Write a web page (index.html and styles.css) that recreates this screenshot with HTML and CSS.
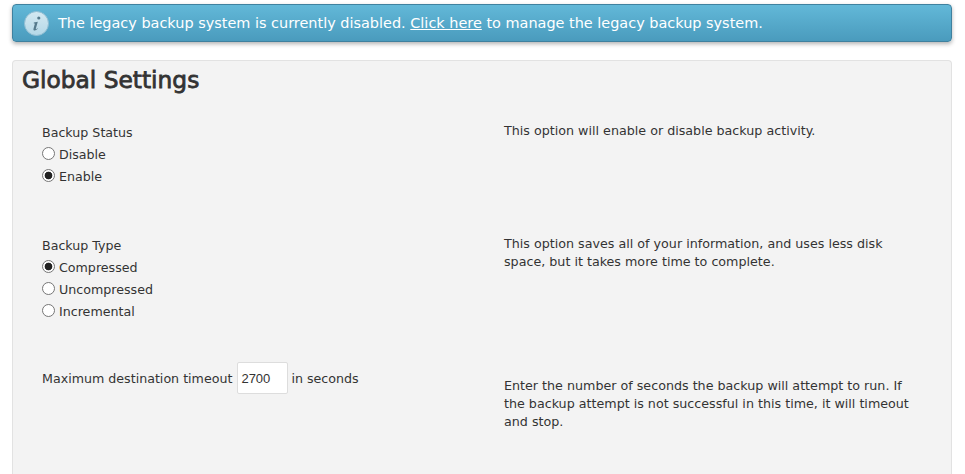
FILE: index.html
```html
<!DOCTYPE html>
<html lang="en">
<head>
    <meta charset="UTF-8">
    <title>Backup Configuration</title>
    <link rel="stylesheet" href="styles.css">
</head>
<body>
    <div class="notice">
        <span class="noticeIcon">
            <svg width="25" height="25" viewBox="0 0 25 25">
                <defs>
                    <linearGradient id="iconFill" x1="0" y1="0" x2="0" y2="1">
                        <stop offset="0" stop-color="#d4e9f2"/>
                        <stop offset="1" stop-color="#b4d8e7"/>
                    </linearGradient>
                </defs>
                <circle cx="12.500" cy="12.500" r="12" fill="url(#iconFill)" stroke="#8fbdd2" stroke-width="1"/>
                <path d="M13.200 7a1.600 1.600 0 1 0 3.200 0a1.600 1.600 0 1 0-3.200 0zM9.800 11.500l4-.7-2 7c-.1.500.3.600.7.300l1-.9.400.4c-1 1.300-2.200 2-3.300 2-1 0-1.400-.7-1.100-1.800l1.400-5.200-1.100-.1z" fill="#557a8c"/>
            </svg>
        </span>
        <span>The legacy backup system is currently disabled. <a href="#">Click here</a> to manage the legacy backup system.</span>
    </div>
    <div class="panel">
        <h2>Global Settings</h2>
        <div class="row rowStatus">
            <div class="field">
                <div class="fieldLabel">Backup Status</div>
                <label class="radio"><input type="radio" name="status">Disable</label>
                <label class="radio"><input type="radio" name="status" checked>Enable</label>
            </div>
            <p class="help">This option will enable or disable backup activity.</p>
        </div>
        <div class="row rowType">
            <div class="field">
                <div class="fieldLabel">Backup Type</div>
                <label class="radio"><input type="radio" name="type" checked>Compressed</label>
                <label class="radio"><input type="radio" name="type">Uncompressed</label>
                <label class="radio"><input type="radio" name="type">Incremental</label>
            </div>
            <p class="help">This option saves all of your information, and uses less disk space, but it takes more time to complete.</p>
        </div>
        <div class="row rowTimeout">
            <div class="field inline">
                <span>Maximum destination timeout</span>
                <input type="text" class="sText" value="2700">
                <span>in seconds</span>
            </div>
            <p class="help helpLow">Enter the number of seconds the backup will attempt to run. If the backup attempt is not successful in this time, it will timeout and stop.</p>
        </div>
    </div>
</body>
</html>
```

FILE: styles.css
```css
* {
    margin: 0;
    padding: 0;
    box-sizing: border-box;
}

html, body {
    height: 474px;
    overflow: hidden;
}

body {
    background: #fff;
    padding: 4px 13px 0 12px;
    font-family: "DejaVu Sans", sans-serif;
    font-size: 12.65px;
    line-height: 18px;
    color: #333;
}

.notice {
    display: flex;
    align-items: center;
    gap: 9px;
    height: 38px;
    padding-left: 11px;
    border: 1px solid #3f819f;
    border-radius: 4px;
    background: linear-gradient(#62b8d8, #4a9bbd);
    box-shadow: 0 2px 4px rgba(0, 0, 0, .3);
    color: #fff;
    font-size: 14.44px;
}
.notice a {
    color: #fff;
}
.noticeIcon {
    display: flex;
}

.panel {
    height: 414px;
    margin-top: 18px;
    padding: 5px 9px;
    background: #f3f3f3;
    border: 1px solid #e2e2e2;
    border-bottom: 0;
    border-radius: 4px 4px 0 0;
}
.panel h2 {
    font-size: 23.3px;
    line-height: 27px;
    font-weight: normal;
    -webkit-text-stroke: .8px #333;
    color: #333;
}

.row {
    display: grid;
    grid-template-columns: 462px 410px;
    padding-left: 20px;
}
.rowStatus {
    margin-top: 31px;
    height: 113px;
}
.rowType {
    height: 133px;
}

.fieldLabel {
    height: 18px;
    margin-bottom: 4px;
}
.radio {
    display: flex;
    align-items: center;
    height: 18px;
    margin-bottom: 4px;
}
.radio input {
    appearance: none;
    width: 13px;
    height: 13px;
    margin-right: 4px;
    position: relative;
    top: -2px;
    border: 1px solid #767676;
    border-radius: 50%;
    background: #fff;
}
.radio input:checked {
    background: radial-gradient(circle, #222 0, #222 3.5px, #fff 4.2px);
}

.help {
    margin-top: -2px;
    font-size: 12.7px;
}
.helpLow {
    margin-top: 7px;
}

.inline {
    display: flex;
    align-items: center;
    align-self: start;
    gap: 4px;
    margin-top: -8px;
}
.inline span {
    margin-top: 2px;
}
.sText {
    width: 51px;
    height: 32px;
    margin: 0 -1px 0 1px;
    padding-left: 3px;
    border: 1px solid #ddd;
    border-radius: 2px;
    outline: none;
    background: #fff;
    color: #333;
    font-family: "Liberation Sans", sans-serif;
    font-size: 13px;
}
```
